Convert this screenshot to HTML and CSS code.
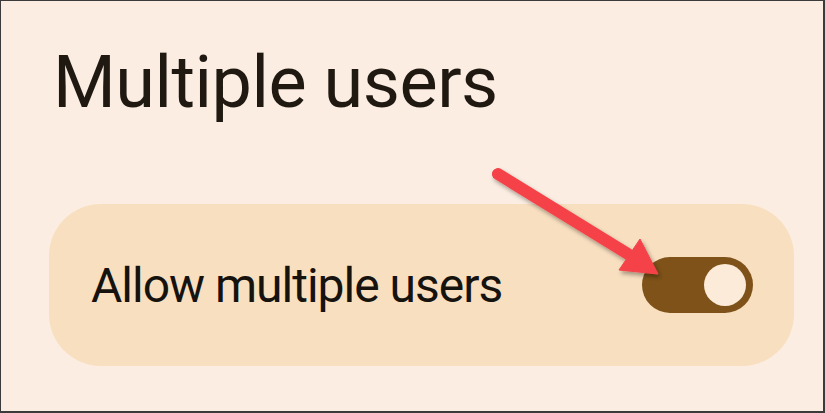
FILE: index.html
```html
<!DOCTYPE html>
<html lang="en">
<head>
    <meta charset="UTF-8">
    <meta name="viewport" content="width=device-width, initial-scale=1.0">
    <title>Multiple users</title>
    <link rel="stylesheet" href="styles.css">
</head>
<body>
    <div class="screen">
        <h1 class="page-title">Multiple users</h1>

        <div class="setting-card">
            <span class="setting-label">Allow multiple users</span>
            <div class="switch on">
                <div class="switch-thumb"></div>
            </div>
        </div>

        <!-- callout arrow pointing at the switch -->
        <svg class="callout" width="825" height="413" viewBox="0 0 825 413">
            <defs>
                <filter id="drop" x="-20%" y="-20%" width="140%" height="140%">
                    <feDropShadow dx="2" dy="3" stdDeviation="2" flood-color="#000" flood-opacity="0.35"/>
                </filter>
            </defs>
            <g filter="url(#drop)" fill="#f5434a" stroke="#f5434a">
                <line x1="498" y1="174" x2="628" y2="254" stroke-width="12" stroke-linecap="round"/>
                <polygon points="658,274 619,270 640,239" stroke-width="1" stroke-linejoin="round"/>
            </g>
        </svg>
    </div>
</body>
</html>
```

FILE: styles.css
```css
* {
    box-sizing: border-box;
}
body {
    margin: 0;
    font-family: Roboto, "Noto Sans", Arial, sans-serif;
}
.screen {
    position: relative;
    width: 825px;
    height: 413px;
    background: #fbede1;
    border: 1px solid #3b3b3b;
    border-width: 1px 2px 2px 1px;
    padding: 40px 0 0 0;
    overflow: hidden;
}
.page-title {
    margin: 0 0 0 52px;
    font-size: 72px;
    line-height: 84px;
    font-weight: 400;
    letter-spacing: -0.5px;
    color: #1f1912;
}
.setting-card {
    margin: 79px 0 0 48px;
    width: 745px;
    height: 162px;
    background: #f8dfc0;
    border-radius: 52px;
    display: flex;
    align-items: center;
    justify-content: space-between;
    padding: 0 41px 0 42px;
}
.setting-label {
    font-size: 48px;
    letter-spacing: -1px;
    color: #16120d;
}
.switch {
    width: 111px;
    height: 56px;
    border-radius: 28px;
    background: #7e5218;
    display: flex;
    align-items: center;
    justify-content: flex-end;
    padding-right: 7px;
}
.switch-thumb {
    width: 42px;
    height: 42px;
    border-radius: 50%;
    background: #fcebd9;
}
.callout {
    position: absolute;
    left: -1px;
    top: -1px;
}
```
